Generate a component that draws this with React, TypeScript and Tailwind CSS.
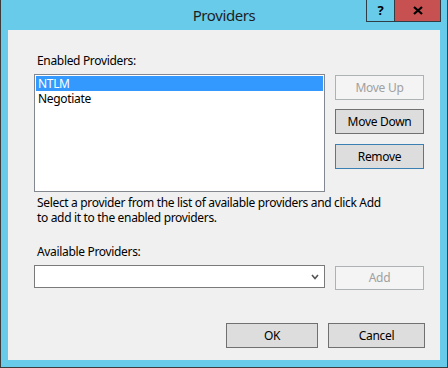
import type { ReactNode } from "react";

const font = { fontFamily: '"Noto Sans", "Segoe UI", sans-serif' };

function Btn({ children, kind = "normal", className = "" }: { children: ReactNode; kind?: "normal" | "disabled" | "default"; className?: string }) {
  const look =
    kind === "disabled"
      ? "border-[#adb2b5] bg-[#f4f4f4] text-[#a0a0a0]"
      : kind === "default"
        ? "border-[#3c7fb1] bg-[#dddddd] text-black"
        : "border-[#707070] bg-[#dddddd] text-black";
  return (
    <div className={`flex items-center justify-center border text-[12px] leading-none tracking-[-0.3px] ${look} ${className}`}>
      {children}
    </div>
  );
}

export default function App() {
  return (
    <div className="flex h-[368px] w-[448px] flex-col border-x border-b border-[#3c3c3c] bg-[#68cbea]" style={font}>
      {/* Title bar */}
      <div className="relative flex h-[30px] shrink-0 items-center justify-center">
        <span className="mt-[1px] text-[15px] tracking-[-0.4px] text-[#1e1e1e]">Providers</span>
        <div className="absolute right-[6px] top-0 flex h-[22px] border-x border-b border-[#2f3d44]">
          <div className="flex w-[28px] items-center justify-center border-r border-[#2f3d44] text-[13px] font-bold text-black">?</div>
          <div className="flex w-[45px] items-center justify-center bg-[#c75050]">
            <svg width="10" height="9" viewBox="0 0 10 9">
              <path d="M1 1 L9 8 M9 1 L1 8" stroke="black" strokeWidth="2.2" />
            </svg>
          </div>
        </div>
      </div>

      {/* Client area */}
      <div className="mx-[7px] mb-[7px] flex flex-1 flex-col bg-[#f0f0f0] pl-[26px] pt-[23px] text-[12px] leading-[15px] tracking-[-0.33px] text-black">
        <div className="pl-[3px]">Enabled Providers:</div>
        <div className="mt-[6px] flex">
          <div className="h-[118px] w-[291px] border border-[#828790] bg-white p-[1px]">
            <div className="h-[15px] bg-[#3399ff] pl-[2px] text-white">NTLM</div>
            <div className="h-[15px] pl-[2px]">Negotiate</div>
          </div>
          <div className="ml-[10px] flex flex-col pt-[1px]">
            <Btn kind="disabled" className="h-[25px] w-[89px]">Move Up</Btn>
            <Btn className="mt-[9px] h-[25px] w-[89px]">Move Down</Btn>
            <Btn kind="default" className="mt-[10px] h-[25px] w-[89px]">Remove</Btn>
          </div>
        </div>
        <div className="mt-[3px] pl-[3px]">
          Select a provider from the list of available providers and click Add
          <br />
          to add it to the enabled providers.
        </div>
        <div className="mt-[19px] pl-[3px]">Available Providers:</div>
        <div className="mt-[6px] flex items-start">
          <div className="flex h-[23px] w-[291px] items-center justify-end border border-[#7a7a7a] bg-white pr-[5px]">
            <svg width="8" height="6" viewBox="0 0 8 6">
              <path d="M1 1 L4 4.5 L7 1" stroke="#555" strokeWidth="1.6" fill="none" />
            </svg>
          </div>
          <Btn kind="disabled" className="ml-[10px] mt-[1px] h-[24px] w-[89px]">Add</Btn>
        </div>
        <div className="mt-[33px] flex pl-[192px]">
          <Btn className="h-[25px] w-[92px]">OK</Btn>
          <Btn className="ml-[10px] h-[25px] w-[97px]">Cancel</Btn>
        </div>
      </div>
    </div>
  );
}
